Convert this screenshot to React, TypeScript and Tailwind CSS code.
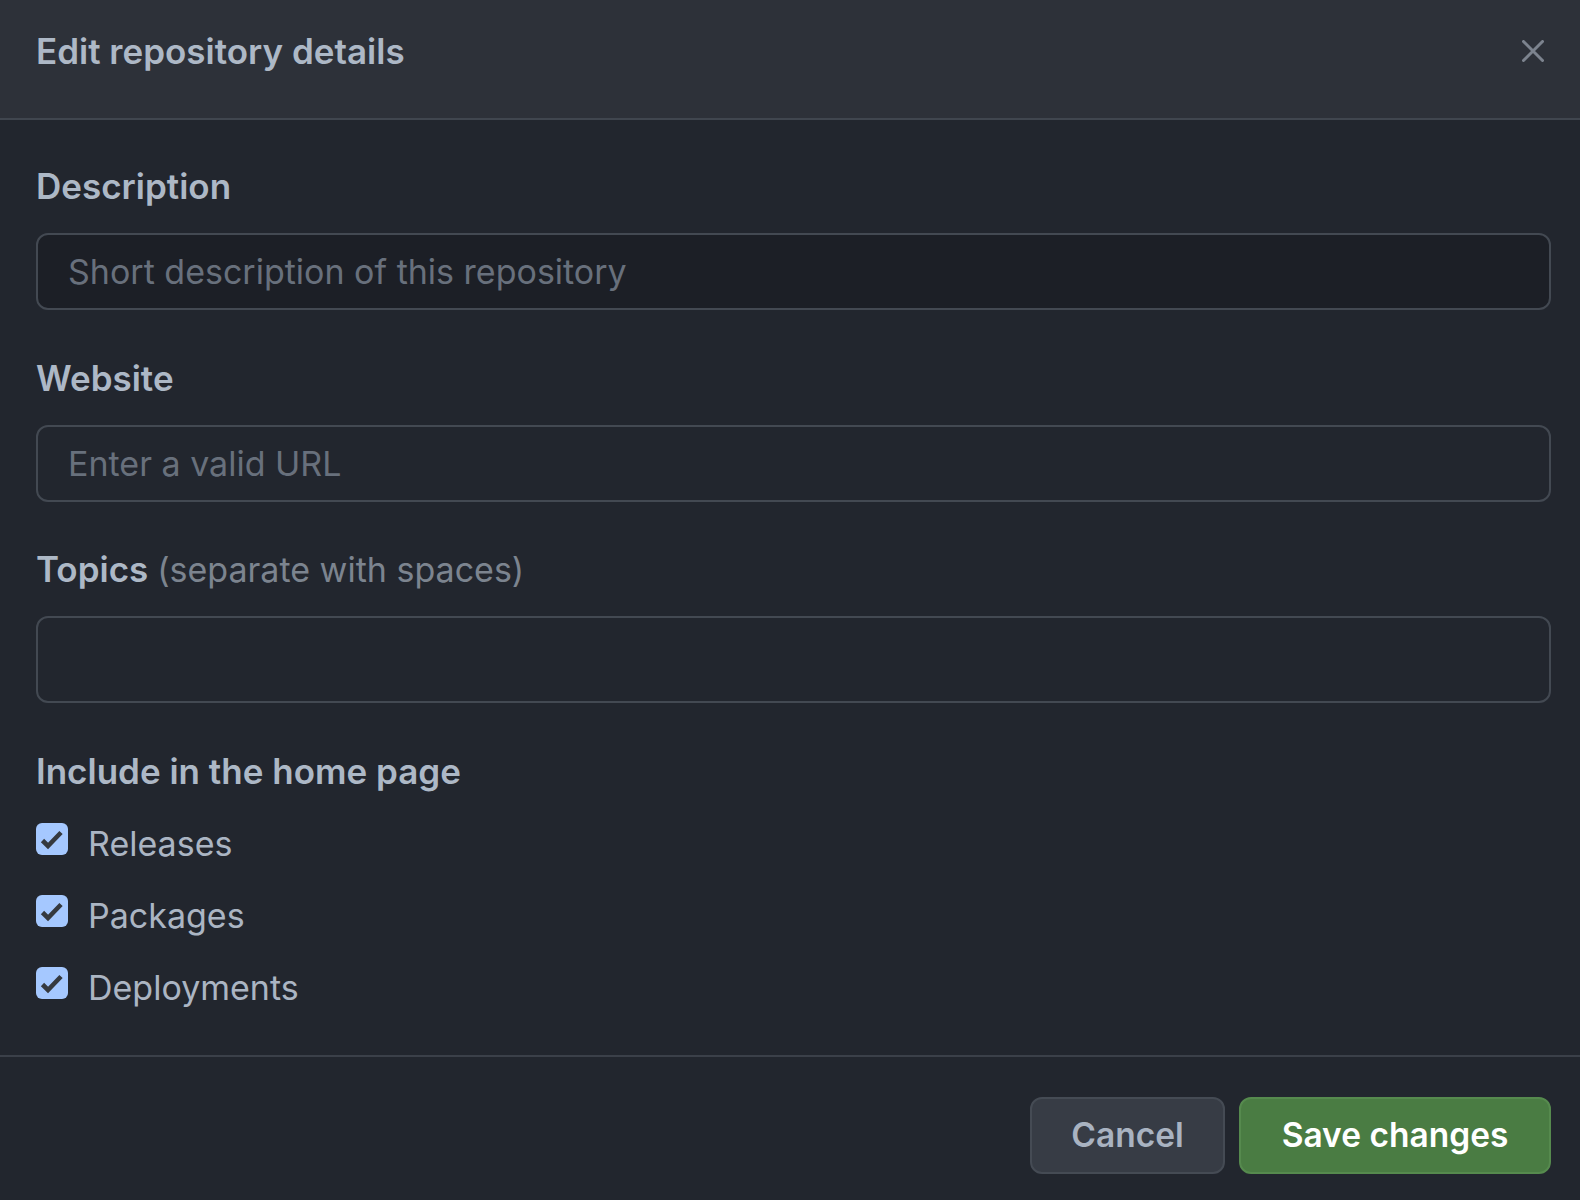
import { useState } from "react";

type Opt = { label: string; checked: boolean };

function CheckRow({ opt, onToggle }: { opt: Opt; onToggle: () => void }) {
  return (
    <label className="flex items-center h-10 cursor-pointer" onClick={onToggle}>
      <span className="w-8 h-8 rounded-[6px] bg-[#a5c8ff] flex items-center justify-center shrink-0">
        {opt.checked && (
          <svg width="32" height="32" viewBox="0 0 32 32" fill="none">
            <path d="M6.5 17.5l5.5 5.5L25 9.5" stroke="#35393f" strokeWidth="4.6" strokeLinecap="butt" strokeLinejoin="miter" />
          </svg>
        )}
      </span>
      <span className="ml-[20px] mt-[9px] text-[34px] text-[#abb5c3]">{opt.label}</span>
    </label>
  );
}

export default function App() {
  const [opts, setOpts] = useState<Opt[]>([
    { label: "Releases", checked: true },
    { label: "Packages", checked: true },
    { label: "Deployments", checked: true },
  ]);

  const labelCls = "block h-10 leading-10 text-[35px] font-semibold text-[#adb8c6]";
  const inputCls =
    "w-full rounded-[12px] border-2 border-[#434952] px-[30px] text-[34px] text-[#c9d1d9] placeholder:text-[#68707c] outline-none";

  return (
    <div
      className="w-[1580px] h-[1200px] overflow-hidden bg-[#22262e] flex flex-col"
      style={{ fontFamily: "Inter, 'Noto Sans', sans-serif" }}
    >
      <div className="h-[120px] shrink-0 bg-[#2d3139] border-b-2 border-[#40464f] flex items-center justify-between pl-[36px] pr-[36px]">
        <h1 className="text-[35px] font-semibold text-[#adb8c6] -mt-[16px]">Edit repository details</h1>
        <button className="-mt-[17px] text-[#7c838e]">
          <svg width="22" height="22" viewBox="0 0 22 22" fill="none">
            <path d="M1.5 1.5l19 19M20.5 1.5l-19 19" stroke="currentColor" strokeWidth="3" strokeLinecap="round" />
          </svg>
        </button>
      </div>

      <div className="pt-[46px] pl-[36px] pr-[29px] pb-[52px] flex flex-col">
        <label className={labelCls}>Description</label>
        <input
          className={inputCls + " mt-[27px] h-[77px] bg-[#1c1f26]"}
          placeholder="Short description of this repository"
        />

        <label className={labelCls + " mt-[48px]"}>Website</label>
        <input className={inputCls + " mt-[27px] h-[77px] bg-transparent"} placeholder="Enter a valid URL" />

        <label className={labelCls + " mt-[47px]"}>
          Topics <span className="font-normal text-[34px] text-[#7c848f]">(separate with spaces)</span>
        </label>
        <input className={inputCls + " mt-[27px] h-[87px] bg-transparent"} />

        <div className={labelCls + " mt-[48px]"}>Include in the home page</div>
        <div className="mt-[28px] flex flex-col gap-[32px]">
          {opts.map((o, i) => (
            <CheckRow
              key={o.label}
              opt={o}
              onToggle={() => {
                const next = [...opts];
                next[i] = { ...o, checked: !o.checked };
                setOpts(next);
              }}
            />
          ))}
        </div>
      </div>

      <div className="flex-1 border-t-2 border-[#3b4049] pt-[40px] pr-[29px] flex justify-end gap-[14px]">
        <button className="h-[77px] w-[195px] rounded-[12px] bg-[#373c45] border-2 border-[#454b54] text-[33.5px] font-semibold text-[#a9b3c1]">
          Cancel
        </button>
        <button className="h-[77px] w-[312px] rounded-[12px] bg-[#4a7c43] border-2 border-[#568a4e] text-[33.5px] font-semibold text-white">
          Save changes
        </button>
      </div>
    </div>
  );
}
